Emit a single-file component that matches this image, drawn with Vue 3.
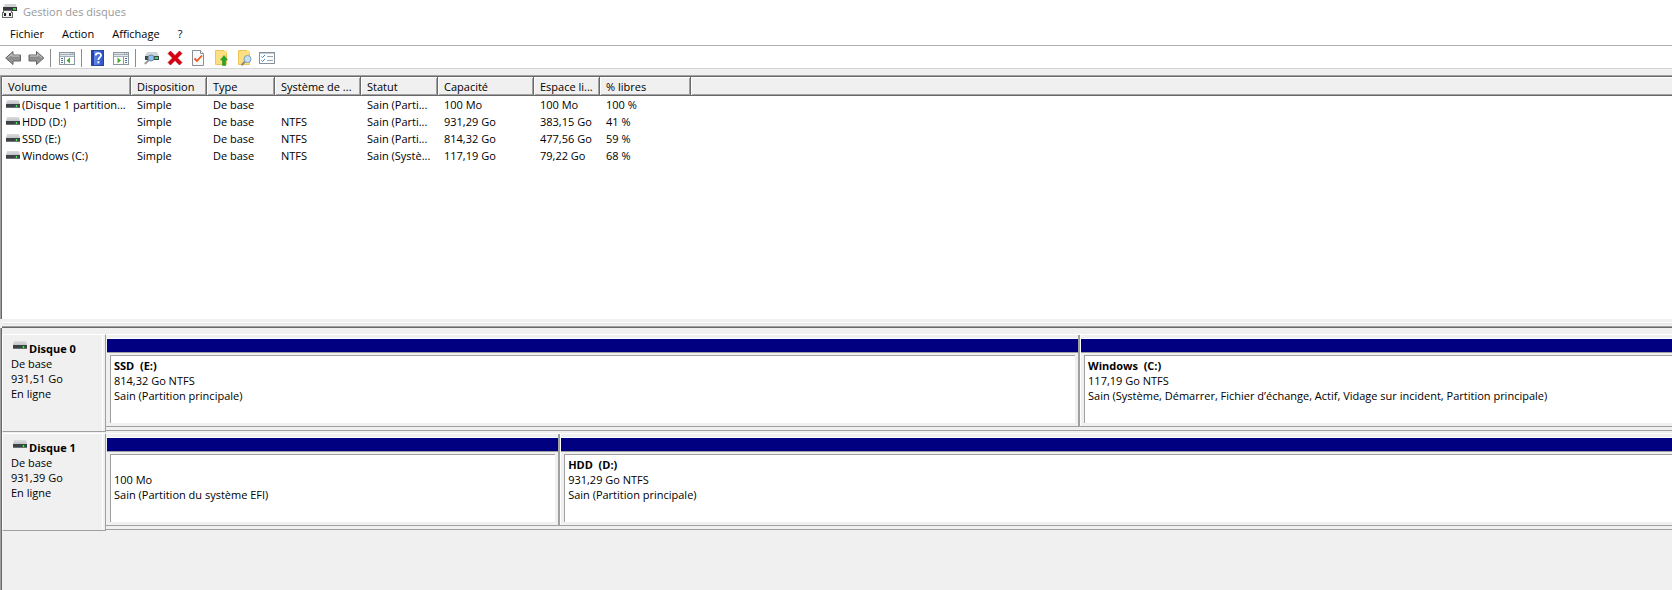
<script setup>
const menus = ['Fichier', 'Action', 'Affichage', '?'];

const tools = [
  { icon: 'back', label: 'Précédent' },
  { icon: 'forward', label: 'Suivant' },
  { icon: 'sep' },
  { icon: 'tree', label: 'Arborescence' },
  { icon: 'sep' },
  { icon: 'help', label: 'Aide' },
  { icon: 'pane', label: 'Volet Actions' },
  { icon: 'sep' },
  { icon: 'rescan', label: 'Analyser' },
  { icon: 'delete', label: 'Supprimer' },
  { icon: 'props', label: 'Propriétés' },
  { icon: 'open', label: 'Ouvrir' },
  { icon: 'explore', label: 'Explorer' },
  { icon: 'list', label: 'Liste' },
];

const columns = [
  { key: 'volume', title: 'Volume' },
  { key: 'layout', title: 'Disposition' },
  { key: 'type', title: 'Type' },
  { key: 'fs', title: 'Système de ...' },
  { key: 'status', title: 'Statut' },
  { key: 'capacity', title: 'Capacité' },
  { key: 'free', title: 'Espace li...' },
  { key: 'percent', title: '% libres' },
];

const volumes = [
  { volume: '(Disque 1 partition...', layout: 'Simple', type: 'De base', fs: '', status: 'Sain (Parti...', capacity: '100 Mo', free: '100 Mo', percent: '100 %' },
  { volume: 'HDD (D:)', layout: 'Simple', type: 'De base', fs: 'NTFS', status: 'Sain (Parti...', capacity: '931,29 Go', free: '383,15 Go', percent: '41 %' },
  { volume: 'SSD (E:)', layout: 'Simple', type: 'De base', fs: 'NTFS', status: 'Sain (Parti...', capacity: '814,32 Go', free: '477,56 Go', percent: '59 %' },
  { volume: 'Windows (C:)', layout: 'Simple', type: 'De base', fs: 'NTFS', status: 'Sain (Systè...', capacity: '117,19 Go', free: '79,22 Go', percent: '68 %' },
];

// share = largeur de la partition en % de la bande du disque
const disks = [
  {
    name: 'Disque 0',
    size: '931,51 Go',
    partitions: [
      { name: 'SSD  (E:)', size: '814,32 Go NTFS', status: 'Sain (Partition principale)', share: 62.2 },
      { name: 'Windows  (C:)', size: '117,19 Go NTFS', status: 'Sain (Système, Démarrer, Fichier d’échange, Actif, Vidage sur incident, Partition principale)', share: 37.8 },
    ],
  },
  {
    name: 'Disque 1',
    size: '931,39 Go',
    partitions: [
      { name: '', size: '100 Mo', status: 'Sain (Partition du système EFI)', share: 29 },
      { name: 'HDD  (D:)', size: '931,29 Go NTFS', status: 'Sain (Partition principale)', share: 71 },
    ],
  },
];
</script>

<template>
  <div class="window">
    <svg class="defs" width="0" height="0" aria-hidden="true">
      <defs>
        <linearGradient id="arrow-fill" x1="0" y1="0" x2="0" y2="1">
          <stop offset="0" stop-color="#b4b4b4" />
          <stop offset="0.5" stop-color="#8a8a8a" />
          <stop offset="1" stop-color="#a8a8a8" />
        </linearGradient>
        <linearGradient id="help-fill" x1="0" y1="0" x2="1" y2="0">
          <stop offset="0" stop-color="#2443a8" />
          <stop offset="0.2" stop-color="#2443a8" />
          <stop offset="0.25" stop-color="#5c83e6" />
          <stop offset="1" stop-color="#2b50c4" />
        </linearGradient>
        <linearGradient id="drive-top" x1="0" y1="0" x2="0" y2="1">
          <stop offset="0" stop-color="#dcdee0" />
          <stop offset="1" stop-color="#c0c3c7" />
        </linearGradient>
        <symbol id="drive" viewBox="0 0 14 9">
          <path d="M1 0h12l1 4H0z" fill="url(#drive-top)" />
          <rect y="4" width="14" height="4" fill="#3d4247" />
          <rect y="7" width="14" height="1" fill="#6d7276" />
          <rect x="9" y="5" width="3" height="2" fill="#1a7c22" />
          <rect x="10" y="5" width="1" height="2" fill="#4df05a" />
        </symbol>
      </defs>
    </svg>

    <header class="titlebar">
      <svg class="app-icon" width="16" height="16" viewBox="0 0 16 16">
        <path d="M3 1h11l1 4H1z" fill="#d0d2d4" />
        <rect x="1" y="4" width="14" height="4" fill="#34383b" />
        <rect x="11" y="5" width="3" height="2" fill="#2fd23c" />
        <path d="M1 7h9v2h1v6H0V9h1z" fill="#6a6a6a" />
        <path d="M2 8h7v2h1v4H1v-4h1z" fill="#f0f0f0" />
        <rect x="2" y="10" width="2" height="3" fill="#222" />
        <rect x="7" y="10" width="2" height="3" fill="#222" />
      </svg>
      <span class="title">Gestion des disques</span>
    </header>

    <nav class="menubar">
      <button v-for="menu in menus" :key="menu" class="menu">{{ menu }}</button>
    </nav>

    <div class="toolbar">
      <template v-for="(tool, index) in tools" :key="index">
        <span v-if="tool.icon === 'sep'" class="separator"></span>
        <button v-else class="tool" :aria-label="tool.label">
          <svg width="17" height="16" viewBox="0 0 17 16">
            <g v-if="tool.icon === 'back'">
              <path d="M.7 8 8 1.5V5h7.5v6H8v3.5z" fill="url(#arrow-fill)" stroke="#626262" stroke-linejoin="round" />
              <path d="M2.5 8 7 4v2h7.5" fill="none" stroke="#c4c4c4" />
            </g>
            <g v-else-if="tool.icon === 'forward'">
              <path d="M15.8 8 8.5 1.5V5H1v6h7.5v3.5z" fill="url(#arrow-fill)" stroke="#626262" stroke-linejoin="round" />
              <path d="M2 6h7.5V4l4.5 4" fill="none" stroke="#c4c4c4" />
            </g>
            <g v-else-if="tool.icon === 'tree' || tool.icon === 'pane'">
              <rect x=".5" y="2.5" width="15" height="12" fill="#fff" stroke="#8a96a0" />
              <path d="M1 3h14v4H1z" fill="#a4afb8" />
              <path d="M1 3.5h10M12 3.5h1M14 3.5h1M1 5.5h14" stroke="#e2e7ea" />
              <g v-if="tool.icon === 'tree'">
                <path d="M5.5 7v7" stroke="#8a96a0" />
                <path d="M2 8.5h2M2 10.5h2M2 12.5h2" stroke="#4575a8" />
                <path d="M11 7.5v6L7.500 10.5z" fill="#3fae2a" />
              </g>
              <g v-else>
                <path d="M10.5 7v7" stroke="#8a96a0" />
                <path d="M12 8.5h2M12 10.5h2M12 12.5h2" stroke="#4575a8" />
                <path d="M4.5 7.5v6L8 10.5z" fill="#3fae2a" />
              </g>
            </g>
            <g v-else-if="tool.icon === 'help'">
              <rect x="1.5" y=".5" width="12" height="15" fill="url(#help-fill)" stroke="#2846a0" />
              <path d="M5.700 5.5C5.7 2.3 11 2.3 11 5.3 11 7.6 8.4 7.3 8.4 10" fill="none" stroke="#fff" stroke-width="1.8" />
              <rect x="7.4" y="11.3" width="2" height="2" fill="#fff" />
            </g>
            <g v-else-if="tool.icon === 'rescan'">
              <path d="M3 2h10l2 4H1z" fill="#d0d3d5" />
              <rect x="1" y="6" width="14" height="4" fill="#3f464b" />
              <rect x="11" y="7" width="3" height="2" fill="#39dc45" />
              <path d="M5.5 9.5.8 14" stroke="#9b9b9b" stroke-width="2" />
              <circle cx="7" cy="8" r="3" fill="#8fc0e8" stroke="#6c8ba6" />
            </g>
            <g v-else-if="tool.icon === 'delete'">
              <path d="M1 3.5 3.5 1 8 5.5 12.5 1 15 3.5 10.5 8 15 12.5 12.5 15 8 10.5 3.5 15 1 12.5 5.5 8z" fill="#d8000f" stroke="#b0000a" stroke-width=".6" />
            </g>
            <g v-else-if="tool.icon === 'props'">
              <path d="M2.5.5h8l3 3v12h-11z" fill="#f8f9fb" stroke="#8a8f96" />
              <path d="M10.5.5v3h3" fill="#fff" stroke="#8a8f96" />
              <path d="m4.5 8.5 2.5 2.5 5-5.500" fill="none" stroke="#e8581c" stroke-width="1.8" />
            </g>
            <g v-else-if="tool.icon === 'open'">
              <path d="M2.5.5h11v14h-11z" fill="#fbdf80" stroke="#ecc557" />
              <path d="M11 .5h2.500v2" fill="none" stroke="#fff3c4" />
              <path d="M11 5.5 14.5 10h-2v5.500h-3V10h-2z" fill="#25a52b" stroke="#178a1d" stroke-width=".5" />
            </g>
            <g v-else-if="tool.icon === 'explore'">
              <path d="M2.5.5h11v14h-11z" fill="#fbdf80" stroke="#ecc557" />
              <path d="M11 .5h2.500v2" fill="none" stroke="#fff3c4" />
              <path d="m9 11.500-3.500 3.700" stroke="#8a8a8a" stroke-width="2" />
              <circle cx="11.5" cy="9" r="3.5" fill="#c6e0f3" stroke="#7fa1bd" />
            </g>
            <g v-else>
              <rect x=".5" y="2.5" width="15" height="11" fill="#fff" stroke="#87919a" />
              <path d="M1 3.5h14" stroke="#c6ced5" />
              <path d="m2.500 6.500 1 1L6 5M2.500 10.500l1 1L6 9" fill="none" stroke="#2684d8" />
              <path d="M8 6.5h6M8 10.5h6" stroke="#9aa4ac" />
            </g>
          </svg>
        </button>
      </template>
    </div>

    <main class="content">
      <section class="volume-pane">
        <table class="volumes">
          <colgroup>
            <col v-for="column in columns" :key="column.key" :class="'col-' + column.key" />
            <col />
          </colgroup>
          <thead>
            <tr>
              <th v-for="column in columns" :key="column.key">{{ column.title }}</th>
              <td class="filler"></td>
            </tr>
          </thead>
          <tbody>
            <tr v-for="row in volumes" :key="row.volume">
              <td v-for="column in columns" :key="column.key" :class="{ name: column.key === 'volume' }">
                <svg v-if="column.key === 'volume'" class="drive" width="14" height="9"><use href="#drive" /></svg>
                <span>{{ row[column.key] }}</span>
              </td>
            </tr>
          </tbody>
        </table>
      </section>

      <div class="splitter"></div>

      <section class="disk-pane">
        <div v-for="disk in disks" :key="disk.name" class="disk">
          <div class="disk-label">
            <div class="disk-name">
              <svg class="drive" width="14" height="9"><use href="#drive" /></svg>
              <span>{{ disk.name }}</span>
            </div>
            <div>De base</div>
            <div>{{ disk.size }}</div>
            <div>En ligne</div>
          </div>
          <div class="strip">
            <div v-for="part in disk.partitions" :key="part.size" class="partition" :style="{ width: part.share + '%' }">
              <div class="bar"></div>
              <div class="box">
                <div class="part-name">{{ part.name }}</div>
                <div>{{ part.size }}</div>
                <div>{{ part.status }}</div>
              </div>
            </div>
          </div>
        </div>
      </section>
    </main>
  </div>
</template>

<style>
body {
  margin: 0;
  background: #f0f0f0;
}
</style>

<style scoped>
.window {
  display: flex;
  flex-direction: column;
  min-height: 100vh;
  background: #fff;
  color: #000;
  font-family: "Open Sans", "Noto Sans", sans-serif;
  font-size: 11px;
  line-height: 15px;
  overflow: hidden;
}

.defs {
  position: absolute;
}

.titlebar {
  display: flex;
  align-items: center;
  gap: 5px;
  height: 22px;
  padding: 0 0 2px 2px;
  color: #999;
}

button {
  border: none;
  background: none;
  font: inherit;
  color: inherit;
}

/* barre de menus */
.menubar {
  display: flex;
  height: 21px;
  padding-left: 1px;
  border-bottom: 1px solid #b0b0b6;
}
.menu {
  padding: 0 9px 2px;
}

/* barre d'outils */
.toolbar {
  display: flex;
  align-items: center;
  height: 20px;
  padding: 2px 0 0 2px;
  border-bottom: 1px solid #d4d4d4;
}
.tool {
  display: flex;
  width: 23px;
  padding: 0 0 0 3px;
}
.tool svg { display: block; flex-shrink: 0; }
.separator {
  width: 1px;
  height: 18px;
  margin: 0 5px 0 2px;
  background: #8c8c8c;
}

.content {
  flex-grow: 1;
  display: flex;
  flex-direction: column;
  border-top: 6px solid #f0f0f0;
  background: #f0f0f0;
}

/* liste des volumes */
.volume-pane {
  min-height: 242px;
  border-top: 1px solid #a0a0a0;
  border-left: 1px solid #a0a0a0;
  background: #fff;
  box-shadow: inset 1px 1px #696969;
  padding: 1px 0 0 1px;
}
.volumes {
  width: 100%;
  table-layout: fixed;
  border-collapse: separate;
  border-spacing: 0;
}
.col-volume { width: 129px; }
.col-layout { width: 76px; }
.col-type { width: 68px; }
.col-fs { width: 86px; }
.col-status { width: 77px; }
.col-capacity { width: 96px; }
.col-free { width: 66px; }
.col-percent { width: 91px; }

th, td {
  padding: 0 0 0 6px;
  text-align: left;
  font-weight: normal;
  white-space: nowrap;
}
th, .filler {
  height: 18px;
  background: #f0f0f0;
  border-bottom: 1px solid #696969;
  box-shadow: inset 1px 1px #fff, inset -1px -1px #a0a0a0;
}
th {
  border-right: 1px solid #696969;
}
.filler {
  box-shadow: inset 1px 1px #fff, inset 0 -1px #a0a0a0;
}
tbody td {
  height: 17px;
  line-height: 17px;
}
.name {
  padding-left: 4px;
}
.name .drive {
  margin-right: 2px;
}

.splitter {
  height: 2px;
  margin: 3px 0 0 2px;
  padding-top: 2px;
  border-top: 1px solid #fff;
  border-bottom: 1px solid #696969;
  box-shadow: inset 0 1px #e3e3e3, inset 0 -1px #a0a0a0;
}

/* vue graphique des disques */
.disk-pane {
  flex-grow: 1;
  padding: 5px 0 0 1px;
  border-left: 1px solid #a0a0a0;
  box-shadow: inset 1px 0 #696969;
}
.disk {
  display: flex;
  padding-top: 1px;
}
.disk-label {
  flex-shrink: 0;
  box-sizing: border-box;
  width: 104px;
  padding: 6px 0 30px 8px;
  border: 1px solid #fff;
  border-right-color: #a0a0a0;
  border-bottom-color: #a0a0a0;
  box-shadow: inset -2px 0 #f0f0f0, inset -3px 0 #fff;
}
.disk-name {
  display: flex;
  gap: 2px;
  padding-left: 2px;
  font-weight: bold;
}
.strip {
  flex-grow: 1;
  display: flex;
  min-width: 0;
  margin-bottom: 1px;
  padding-bottom: 3px;
  border-top: 1px solid #fff;
  border-bottom: 1px solid #a0a0a0;
}
.partition {
  display: flex;
  flex-direction: column;
  box-sizing: border-box;
  padding-top: 3px;
  border-bottom: 1px solid #a0a0a0;
  min-width: 0;
}
.partition + .partition {
  box-shadow: inset 1px 0 #fff;
}
.partition:not(:last-child) {
  border-right: 2px solid #a0a0a0;
}
.bar {
  height: 13px;
  margin-left: 1px;
  border-top: 1px solid #fff;
  border-bottom: 1px solid #a0a0a0;
  background: #000080;
}
.box {
  flex-grow: 1;
  margin: 2px 3px 3px 4px;
  padding: 2px 0 0 3px;
  border-top: 1px solid #a0a0a0;
  border-left: 1px solid #a0a0a0;
  background: #fff;
  white-space: nowrap;
  overflow: hidden;
}
.partition:last-child .box {
  margin-right: 0;
}
.part-name {
  min-height: 15px;
  font-weight: bold;
  white-space: pre;
}
</style>
